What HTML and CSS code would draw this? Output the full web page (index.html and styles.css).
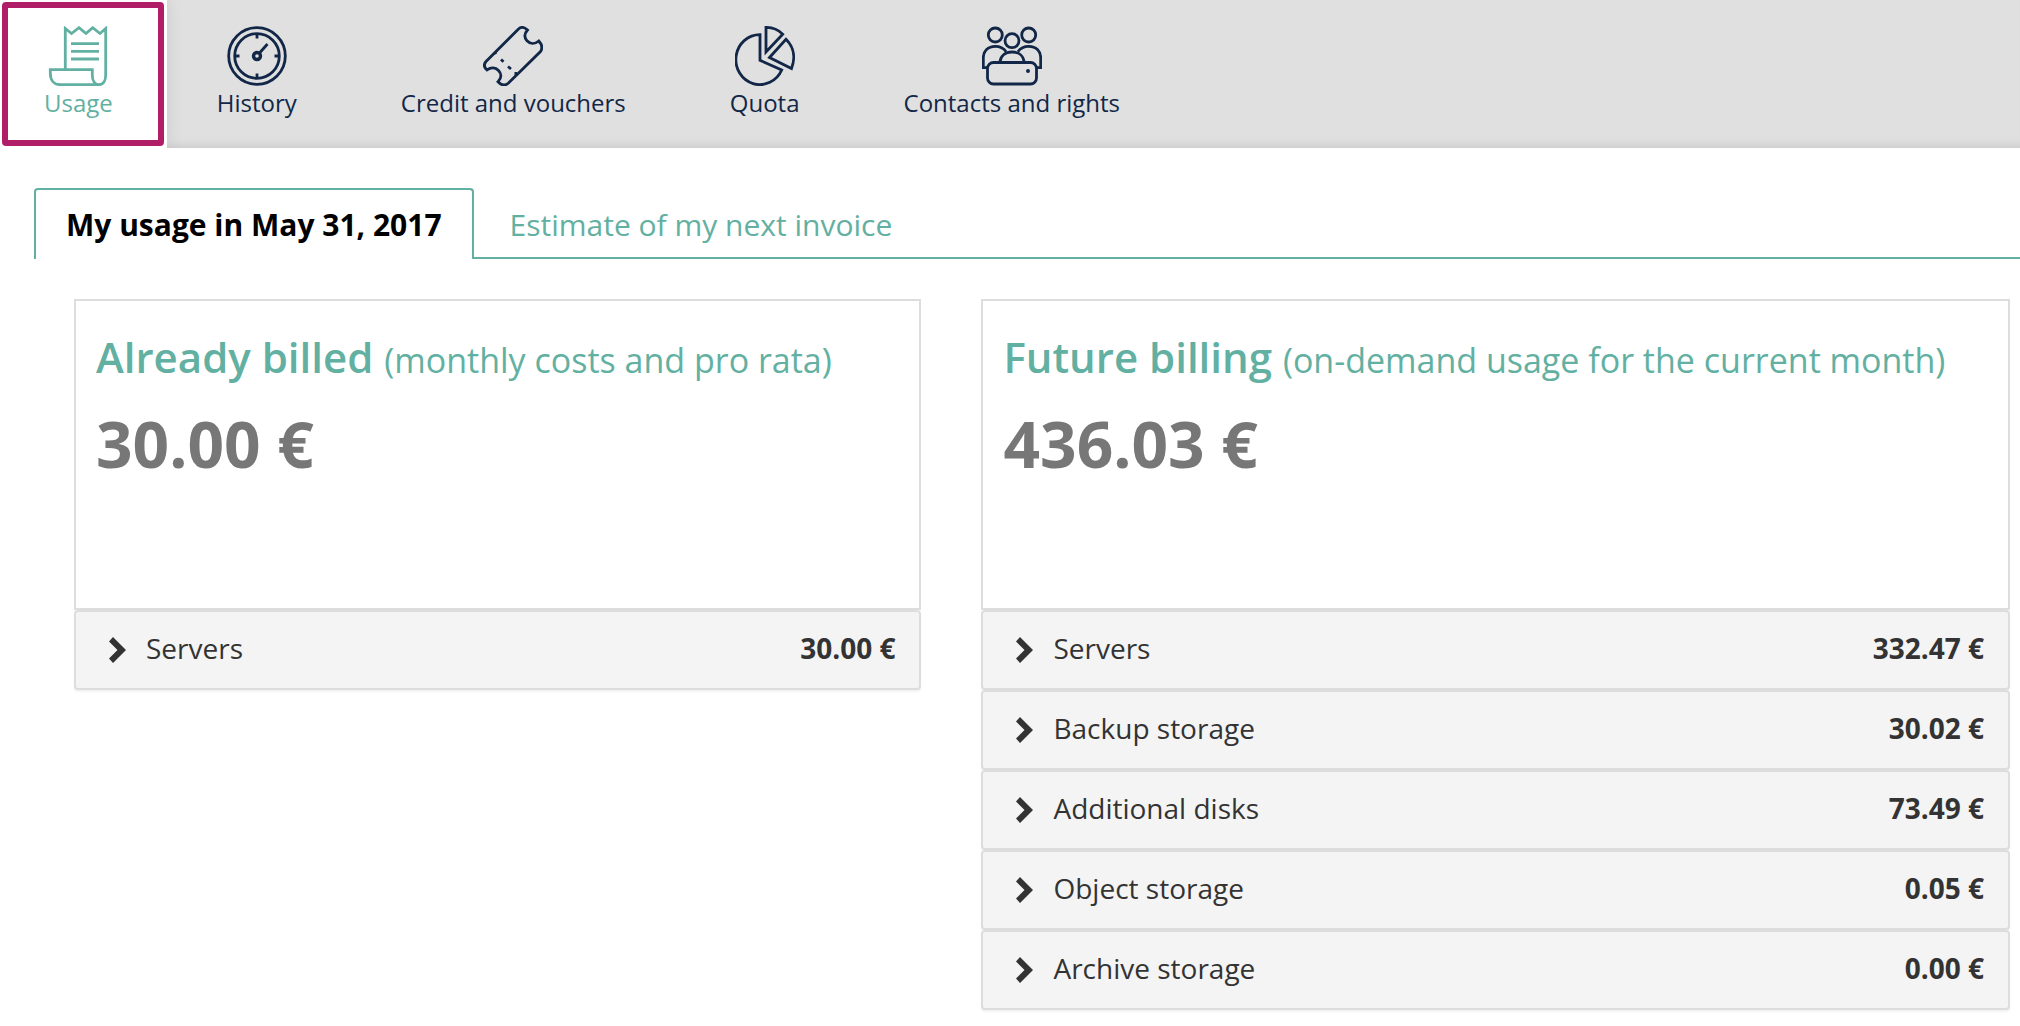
FILE: index.html
```html
<!DOCTYPE html>
<html lang="en">
<head>
<meta charset="utf-8">
<title>Usage and billing</title>
<link rel="stylesheet" href="styles.css">
</head>
<body>
<svg class="symbols" aria-hidden="true">
  <symbol id="chevron" viewBox="0 0 17 26"><path d="M4 0 17 13 4 26 0 21.500 8.500 13 0 4.500z"/></symbol>
</svg>
<nav class="topnav" aria-label="Account">
  <a class="topnav-item is-active" href="#usage" aria-current="page">
    <svg class="topnav-icon" viewBox="0 0 60 60" aria-hidden="true">
      <path d="M17.300 43.500V2.500L23.500 7.500 31 1.700 38 7.500 44.700 1.700 52 7.500 57.700 2.500V49C57.700 55 55 58.700 51 58.700 46.500 58.700 44.300 54 44.300 49V43.700H2.300V47C2.300 54.500 6 58.700 12 58.700H51"/>
      <path d="M23 17.700H51M23 25.400H51M23 33H51"/>
    </svg>
    <span>Usage</span>
  </a>
  <a class="topnav-item" href="#history">
    <svg class="topnav-icon" viewBox="0 0 60 60" aria-hidden="true">
      <circle cx="30" cy="30" r="28.300"/>
      <circle cx="30" cy="30" r="22.300"/>
      <circle cx="30" cy="30" r="3.500" stroke-width="3.400"/>
      <path d="M30 8V12.500M30 47.500V52M8 30H12.500M47.500 30H52M32.500 27 40.500 18"/>
    </svg>
    <span>History</span>
  </a>
  <a class="topnav-item" href="#credit">
    <svg class="topnav-icon" viewBox="0 0 60 60" aria-hidden="true">
      <path d="M3 35.500 35.500 3C38 .800 41 .700 44.500 4 41 8 41.500 12 44 14.800 47 18 51.500 18.500 55.800 15 59.500 19 59.500 22.500 57.500 25.500L25.500 57C22 60 18.500 59.500 15 55.700 19 52 18.500 47.500 15.500 44.500 12.500 41.500 8 41 4 44 .500 41 .500 38.500 3 35.500z"/>
      <path d="M12 26.500 13 28M18 33.500 20.500 35.800M25 40.500 28 43M31.500 47.500H34"/>
    </svg>
    <span>Credit and vouchers</span>
  </a>
  <a class="topnav-item" href="#quota">
    <svg class="topnav-icon" viewBox="0 0 60 60" aria-hidden="true">
      <path d="M25 8.600V34.300L46.700 44A24 25 0 1 1 25 8.600z"/>
      <path d="M31 1.400V26L47.700 8.200C43 3.500 37 1.300 31 1.400z"/>
      <path d="M34.500 31.500 51 13.200C59 21 60.500 32 56.500 42.500z"/>
    </svg>
    <span>Quota</span>
  </a>
  <a class="topnav-item" href="#contacts">
    <svg class="topnav-icon" viewBox="0 0 60 60" aria-hidden="true">
      <circle cx="13.300" cy="9" r="7"/>
      <circle cx="46.700" cy="9" r="7"/>
      <circle cx="30" cy="14.700" r="7"/>
      <path d="M5 41.700H1.300V32C1.300 25 6 20.300 13.300 20.300 18 20.300 21.500 22 24 25.500M55 41.700H58.700V32C58.700 25 54 20.300 46.700 20.300 42 20.300 38.500 22 36 25.500M18 36C18.500 30 23 26 30 26S41.500 30 42 36"/>
      <rect x="5.500" y="36.500" width="49" height="21.500" rx="6"/>
      <circle cx="46" cy="45" r="1" stroke-width="2"/>
    </svg>
    <span>Contacts and rights</span>
  </a>
</nav>
<main class="content">
  <div class="tabs" role="tablist">
    <button class="tab is-active" type="button" role="tab" aria-selected="true">My usage in May 31, 2017</button>
    <button class="tab" type="button" role="tab" aria-selected="false">Estimate of my next invoice</button>
  </div>
  <div class="panels">
    <section class="panel">
      <header class="panel-head">
        <h2 class="panel-title">Already billed <small>(monthly costs and pro rata)</small></h2>
        <p class="panel-total">30.00 €</p>
      </header>
      <button class="row" type="button" aria-expanded="false"><svg class="chevron" aria-hidden="true"><use href="#chevron"/></svg><span>Servers</span><strong>30.00 €</strong></button>
    </section>
    <section class="panel">
      <header class="panel-head">
        <h2 class="panel-title">Future billing <small>(on-demand usage for the current month)</small></h2>
        <p class="panel-total">436.03 €</p>
      </header>
      <button class="row" type="button" aria-expanded="false"><svg class="chevron" aria-hidden="true"><use href="#chevron"/></svg><span>Servers</span><strong>332.47 €</strong></button>
      <button class="row" type="button" aria-expanded="false"><svg class="chevron" aria-hidden="true"><use href="#chevron"/></svg><span>Backup storage</span><strong>30.02 €</strong></button>
      <button class="row" type="button" aria-expanded="false"><svg class="chevron" aria-hidden="true"><use href="#chevron"/></svg><span>Additional disks</span><strong>73.49 €</strong></button>
      <button class="row" type="button" aria-expanded="false"><svg class="chevron" aria-hidden="true"><use href="#chevron"/></svg><span>Object storage</span><strong>0.05 €</strong></button>
      <button class="row" type="button" aria-expanded="false"><svg class="chevron" aria-hidden="true"><use href="#chevron"/></svg><span>Archive storage</span><strong>0.00 €</strong></button>
    </section>
  </div>
</main>
</body>
</html>
```
FILE: styles.css
```css
* {
  box-sizing: border-box;
}

body {
  margin: 0;
  background: #fff;
  color: #333;
  font-family: "Open Sans", "Noto Sans", sans-serif;
}

button {
  font: inherit;
  margin: 0;
  cursor: pointer;
}

.symbols {
  display: none;
}

/* Top navigation */
.topnav {
  display: flex;
  background: #e0e0e0;
  box-shadow: inset 0 -10px 10px -8px #c8c8c8;
}

.topnav-item {
  display: flex;
  flex-direction: column;
  align-items: center;
  padding: 26px 54px 28px 50px;
  color: #122747;
  font-size: 24px;
  line-height: 34px;
  text-decoration: none;
  white-space: nowrap;
}

.topnav-item.is-active {
  position: relative;
  padding-left: 44px;
  background: #fff;
  color: #62b0a1;
  box-shadow: 0 0 16px rgba(0, 0, 0, 0.1);
  clip-path: inset(0 -20px 0 0);
}

.topnav-item.is-active::after {
  content: "";
  position: absolute;
  inset: 2px 3px 2px 2px;
  border: 6px solid #b01e68;
  border-radius: 4px;
}

.topnav-icon {
  width: 60px;
  height: 60px;
  fill: none;
  stroke: currentColor;
  stroke-width: 2.8;
}

/* Tabs */
.content {
  padding: 40px 0 16px 34px;
}

.tabs {
  display: flex;
  height: 71px;
  background: linear-gradient(#62b0a1, #62b0a1) bottom / 100% 2px no-repeat;
}

.tab {
  padding: 0 34px;
  border: 2px solid transparent;
  border-bottom: 0;
  background: none;
  color: #62b0a1;
  font-size: 30px;
  line-height: 42px;
}

.tab.is-active {
  padding: 0 30px;
  border-color: #62b0a1;
  border-radius: 4px 4px 0 0;
  background: #fff;
  color: #000;
  font-weight: 700;
}

/* Billing panels */
.panels {
  display: grid;
  grid-template-columns: 847fr 1028fr;
  align-items: start;
  gap: 60px;
  padding: 40px 10px 0 40px;
}

.panel-head {
  min-height: 311px;
  padding: 26px 20px;
  border: 2px solid #ddd;
}

.panel-title {
  margin: 0;
  color: #62b0a1;
  font-size: 42px;
  font-weight: 600;
  line-height: 60px;
}

.panel-title small {
  font-size: 34px;
  font-weight: 400;
}

.panel-total {
  margin: 12px 0 0;
  color: #777;
  font-size: 64px;
  font-weight: 700;
  line-height: 84px;
}

.row {
  display: flex;
  align-items: center;
  gap: 20px;
  width: 100%;
  min-height: 80px;
  padding: 0 24px 0 33px;
  border: 2px solid #ddd;
  border-radius: 4px;
  background: #f4f4f4;
  box-shadow: 0 2px 2px rgba(0, 0, 0, 0.05);
  color: #333;
  font-size: 28px;
  line-height: 40px;
  text-align: left;
}

.row span,
.row strong {
  padding-bottom: 4px;
}

.row strong {
  margin-left: auto;
  font-weight: 700;
}

.chevron {
  width: 17px;
  height: 26px;
  fill: #333;
}
```
